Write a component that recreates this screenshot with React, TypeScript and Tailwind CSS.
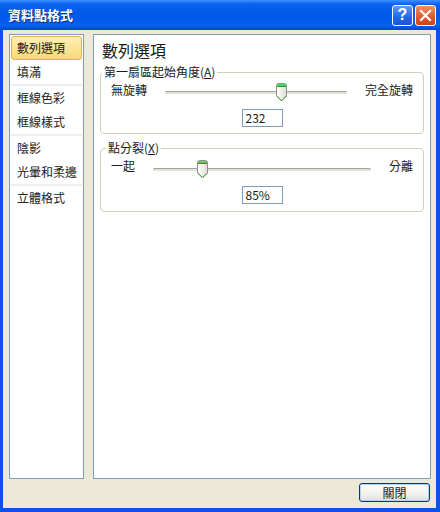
import React from "react";

const F = "font-['Noto_Sans_CJK_TC','Noto_Sans_CJK_SC',sans-serif]";

function Thumb() {
  return (
    <svg width="11" height="19" viewBox="0 0 11 19">
      <defs>
        <linearGradient id="tg" x1="0" y1="0" x2="1" y2="0">
          <stop offset="0" stopColor="#FFFFFF" />
          <stop offset="1" stopColor="#DEDED6" />
        </linearGradient>
      </defs>
      <path
        d="M0.5 2.5 Q0.5 0.5 2.5 0.5 H8.5 Q10.5 0.5 10.5 2.5 V13 L5.5 18 L0.5 13 Z"
        fill="url(#tg)"
        stroke="#8C8F8C"
      />
      <rect x="1" y="1" width="9" height="1.5" fill="#66D066" />
      <rect x="1" y="2.5" width="9" height="1.5" fill="#22A022" />
      <path d="M1 13 L5.5 17.5 L10 13" fill="none" stroke="#45A845" />
    </svg>
  );
}

function Slider({
  left,
  right,
  frac,
  trackMt,
}: {
  left: string;
  right: string;
  frac: number;
  trackMt: string;
}) {
  return (
    <div className="flex items-center h-[20px] px-[10px] gap-[18px] text-[12px] leading-[14px] text-[#1a1a1a]">
      <span className="shrink-0">{left}</span>
      <div className={`relative flex-1 h-[3px] ${trackMt}`}>
        <div className="absolute inset-0 rounded-full border-t border-[#A3A198] bg-[#E4E2D8]" />
        <div
          className="absolute top-[-8px] flex"
          style={{ left: `calc(${frac * 100}% - 5.5px)` }}
        >
          <Thumb />
        </div>
      </div>
      <span className="shrink-0">{right}</span>
    </div>
  );
}

function Group({
  legend,
  legendMl,
  left,
  right,
  frac,
  value,
  trackMt,
  inputMt,
  pb,
  mt,
}: {
  legend: React.ReactNode;
  legendMl: string;
  left: string;
  right: string;
  frac: number;
  value: string;
  trackMt: string;
  inputMt: string;
  pb: string;
  mt: string;
}) {
  return (
    <fieldset
      className={`border border-[#D0D0BF] rounded-[4px] ${mt} ${pb} flex flex-col`}
    >
      <legend
        className={`${legendMl} px-[2px] text-[12px] leading-[16px] text-[#1a1a1a]`}
      >
        {legend}
      </legend>
      <Slider left={left} right={right} frac={frac} trackMt={trackMt} />
      <div className={`flex justify-center ${inputMt}`}>
        <div className="w-[41px] h-[18px] border border-[#7F9DB9] bg-white text-[12px] leading-[16px] pl-[3px] text-[#1a1a1a]">
          {value}
        </div>
      </div>
    </fieldset>
  );
}

const items: (string | null)[] = [
  "數列選項",
  "填滿",
  null,
  "框線色彩",
  "框線樣式",
  null,
  "陰影",
  "光暈和柔邊",
  null,
  "立體格式",
];

export default function App() {
  return (
    <div className={`w-[440px] h-[512px] bg-[#0A53E6] flex flex-col ${F}`}>
      {/* Title bar */}
      <div className="h-[30px] shrink-0 flex items-center pl-[8px] pr-[4px] bg-[linear-gradient(to_bottom,#3D8FFF_0%,#0B61EE_14%,#0058E6_50%,#0660F0_86%,#0044CC_100%)]">
        <span className="text-white font-bold text-[13px] leading-[16px] [text-shadow:1px_1px_0_#0A2A80]">
          資料點格式
        </span>
        <div className="ml-auto flex gap-[2px]">
          <div className="w-[21px] h-[21px] rounded-[3px] border border-white bg-[linear-gradient(to_bottom,#5C9BFF,#2266E8_60%,#1A55D6)] flex items-center justify-center text-white font-bold text-[16px] leading-none font-['Liberation_Sans',sans-serif]">
            ?
          </div>
          <div className="w-[21px] h-[21px] rounded-[3px] border border-white bg-[linear-gradient(to_bottom,#F0906A,#E05A2E_55%,#C8441C)] flex items-center justify-center">
            <svg width="13" height="13" viewBox="0 0 13 13">
              <path
                d="M2 2 L11 11 M11 2 L2 11"
                stroke="white"
                strokeWidth="2.2"
                strokeLinecap="square"
              />
            </svg>
          </div>
        </div>
      </div>

      {/* Body */}
      <div className="flex-1 ml-[3px] mr-[4px] mb-[4px] bg-[#ECE9D8] flex flex-col pt-[4px] pl-[6px] pr-[5px]">
        <div className="flex h-[445px] gap-[9px]">
          {/* Left list */}
          <div className="w-[75px] border border-[#7F9DB9] bg-white pt-[1px] flex flex-col">
            {items.map((it, i) =>
              it === null ? (
                <div key={i} className="h-[2px] bg-[#EEEEEE] mx-[1px]" />
              ) : i === 0 ? (
                <div
                  key={i}
                  className="h-[24px] mx-[1px] flex items-center pl-[5px] rounded-[3px] border border-[#E2B04A] bg-[linear-gradient(to_bottom,#FEF0B5,#FAD87A)] text-[12px] leading-[14px] text-[#1a1a1a]"
                >
                  {it}
                </div>
              ) : (
                <div
                  key={i}
                  className="h-[24px] flex items-center pl-[7px] text-[12px] leading-[14px] text-[#222]"
                >
                  {it}
                </div>
              )
            )}
          </div>

          {/* Right panel */}
          <div className="flex-1 border border-[#7F9DB9] bg-white px-[6px] pt-[5px] flex flex-col">
            <div className="text-[16px] leading-[20px] text-[#1a1a1a] pl-[2px]">
              數列選項
            </div>
            <Group
              legend={
                <>
                  第一扇區起始角度(<span className="underline">A</span>)
                </>
              }
              legendMl="ml-[1px]"
              left="無旋轉"
              right="完全旋轉"
              frac={0.6375}
              value="232"
              trackMt="mt-[4px]"
              inputMt="mt-[9px]"
              pb="pb-[6px]"
              mt="mt-[4px]"
            />
            <Group
              legend={
                <>
                  點分裂(<span className="underline">X</span>)
                </>
              }
              legendMl="ml-[5px]"
              left="一起"
              right="分離"
              frac={0.228}
              value="85%"
              trackMt="mt-[6px]"
              inputMt="mt-[10px]"
              pb="pb-[7px]"
              mt="mt-[6px]"
            />
          </div>
        </div>

        {/* Footer */}
        <div className="flex justify-end mt-[4px]">
          <div className="w-[71px] h-[19px] rounded-[3px] border border-[#003C74] bg-[linear-gradient(to_bottom,#FFFFFF,#F2F1EB_60%,#E0DFD6)] shadow-[inset_0_0_0_1px_#B9D0F4] flex items-center justify-center text-[12px] leading-[14px] text-[#1a1a1a] mr-[1px]">
            關閉
          </div>
        </div>
      </div>
    </div>
  );
}
